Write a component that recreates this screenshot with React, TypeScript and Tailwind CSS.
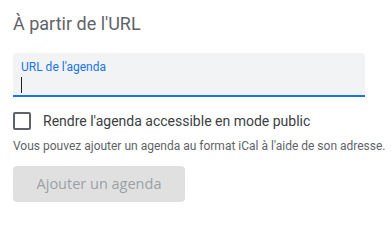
import React from "react"

export default function App() {
  return (
    <div className="w-[391px] h-[231px] bg-white px-[13px] pt-[12px] font-['Roboto','Liberation_Sans',sans-serif]">
      <h2 className="text-[18px] leading-[24px] text-[#5f6368]">
        À partir de l'URL
      </h2>

      <div className="mt-[17px] w-[352px] h-[44px] bg-[#f1f3f4] rounded-t-[4px] border-b-2 border-[#1a73e8] px-[8px] pt-[6px]">
        <div className="text-[12px] leading-[16px] text-[#1a73e8]">URL de l'agenda</div>
        <div className="mt-[2px] w-px h-[16px] bg-[#202124]" />
      </div>

      <label className="mt-[14px] flex items-center gap-[12px]">
        <span className="w-[18px] h-[18px] rounded-[2px] border-2 border-[#5f6368] shrink-0" />
        <span className="text-[14px] leading-[20px] text-[#3c4043]">
          Rendre l'agenda accessible en mode public
        </span>
      </label>

      <p className="mt-[7px] text-[12px] leading-[16px] text-[#5f6368] whitespace-nowrap">
        Vous pouvez ajouter un agenda au format iCal à l'aide de son adresse.
      </p>

      <button
        disabled
        className="mt-[12px] w-[172px] h-[36px] rounded-[4px] bg-[#e0e0e0] text-[14.5px] text-[#9aa0a6] font-['Open_Sans','Roboto',sans-serif]"
      >
        Ajouter un agenda
      </button>
    </div>
  )
}
